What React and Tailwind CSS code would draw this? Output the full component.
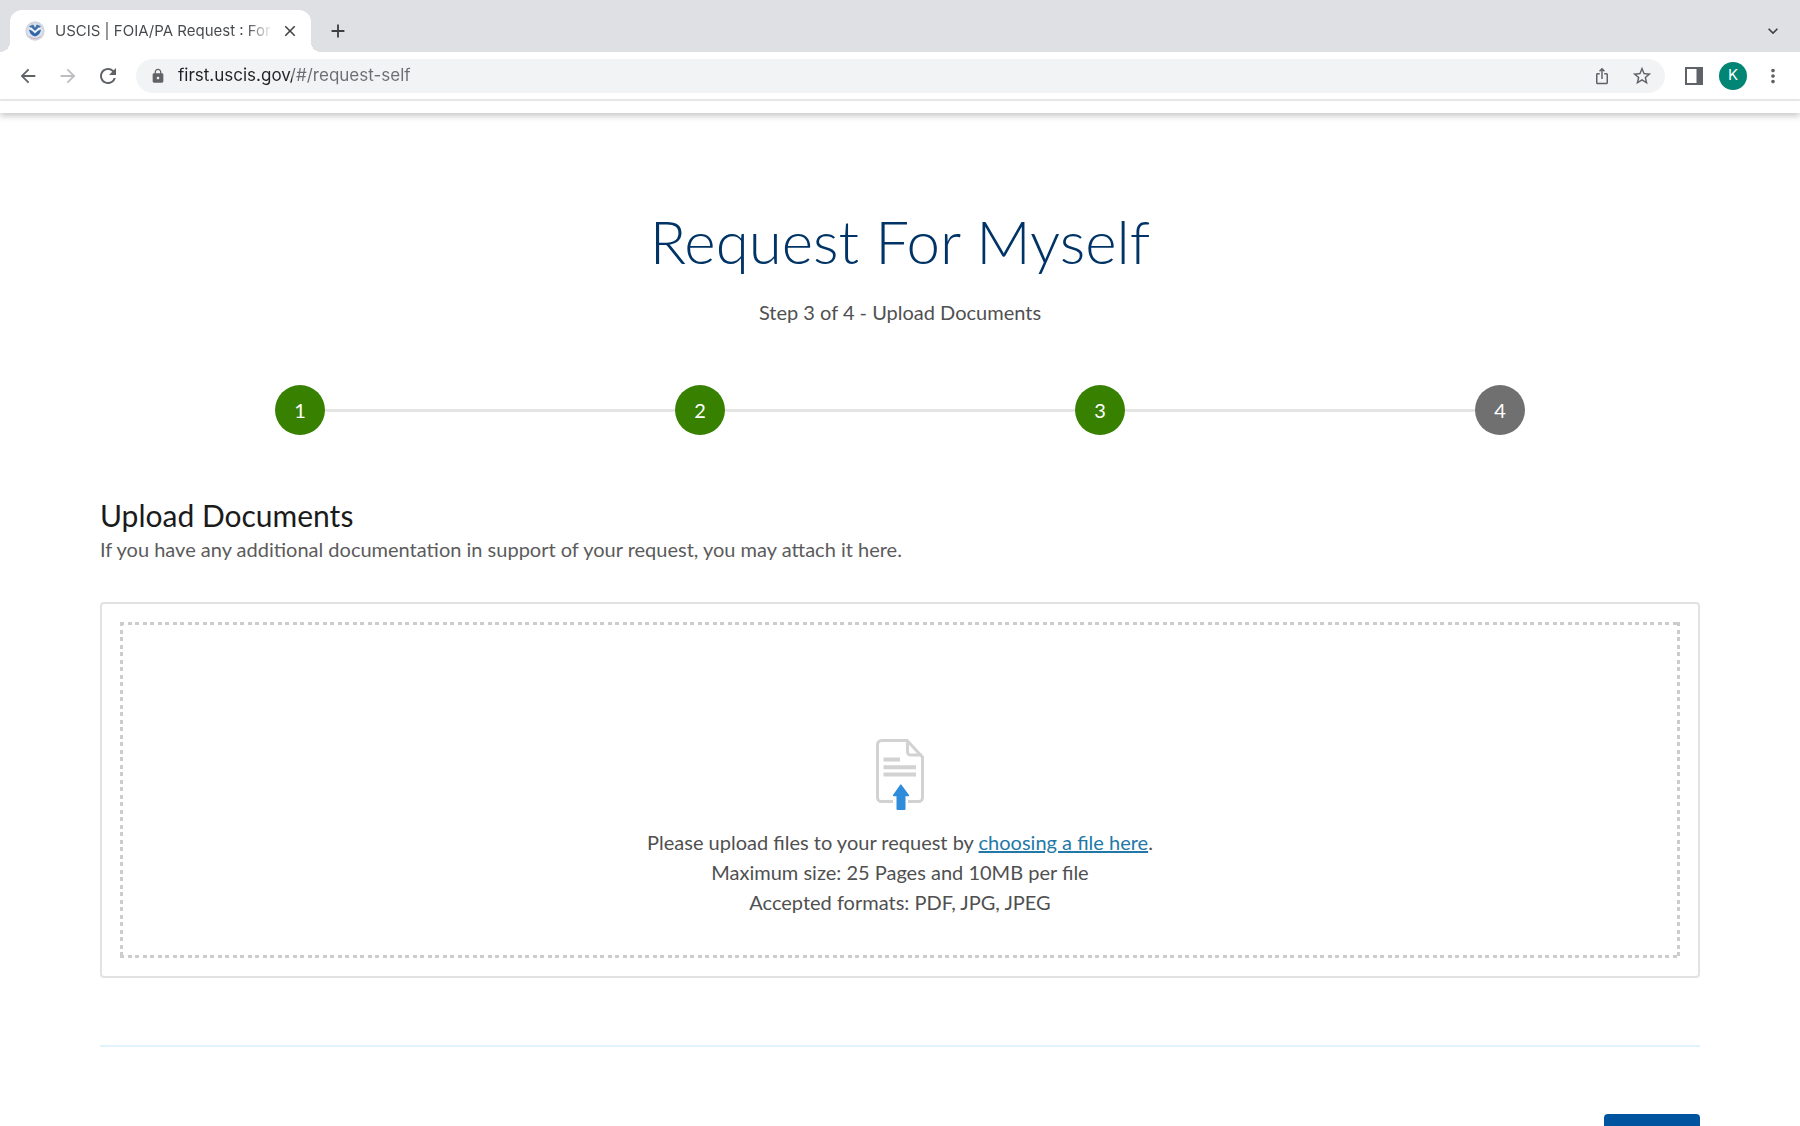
import {
  MdArrowBack,
  MdArrowForward,
  MdRefresh,
  MdLock,
  MdIosShare,
  MdStarBorder,
  MdMoreVert,
  MdClose,
  MdAdd,
  MdKeyboardArrowDown,
} from "react-icons/md";

const steps = [
  { id: 1, done: true },
  { id: 2, done: true },
  { id: 3, done: true },
  { id: 4, done: false },
];

const SealIcon = () => (
  <svg viewBox="0 0 20 20" className="size-5 shrink-0" aria-hidden="true">
    <circle cx="10" cy="10" r="9.7" fill="#d3d6df" />
    <circle cx="10" cy="10" r="7.6" fill="#dbe4ee" />
    <path d="M4 5.2 L8.200 3.600 L10 6.800 L11.800 3.600 L16 5.200 L12.600 8.600 L10 10 L7.400 8.600 Z" fill="#4470a8" />
    <path d="M5.600 6.800 L10 11 L14.400 6.800" fill="none" stroke="#f4f9fd" strokeWidth="1.4" />
    <path d="M4 8.400 L7 9.800 L10 12.400 L13 9.800 L16 8.400 Q15.400 13.600 10 15.600 Q4.600 13.600 4 8.400 Z" fill="#2f66a8" />
    <path d="M4.500 15.400 Q10 19.600 15.500 15.400" fill="none" stroke="#cdb0ba" strokeWidth="1" />
  </svg>
);

const SidePanelIcon = () => (
  <svg viewBox="0 0 18 18" className="size-[18px]" aria-hidden="true">
    <path d="M0 0h18v18H0z M2 2v14h9.500V2z" fill="#5f6368" fillRule="evenodd" />
  </svg>
);

const UploadIcon = () => (
  <svg viewBox="0 0 48 72" className="h-[72px] w-12" fill="none" aria-hidden="true">
    <path
      d="M17 62.500H5.500a4 4 0 0 1-4-4V5.500a4 4 0 0 1 4-4H31L46.500 18v40.500a4 4 0 0 1-4 4H32"
      stroke="#d2d2d2"
      strokeWidth="3"
    />
    <path d="M31.500 2v11a3 3 0 0 0 3 3H46" stroke="#d2d2d2" strokeWidth="3" />
    <path d="M7.500 20.500H24M7.500 28.200H40M7.500 35.500H40" stroke="#d2d2d2" strokeWidth="4" />
    <path
      d="M25.200 45.600L33 56a.8.8 0 0 1-.6 1.200H29.500V70a1 1 0 0 1-1 1h-7a1 1 0 0 1-1-1V57.200h-2.900a.8.8 0 0 1-.6-1.200l7.400-10.400a.5.5 0 0 1 .8 0z"
      fill="#2f8cda"
    />
  </svg>
);

const TabStrip = () => (
  <div className="flex h-[52px] items-end bg-[#dee0e4] pl-[10px]">
    <div className="relative flex h-[42px] w-[301px] items-center rounded-t-xl bg-white pr-3 pl-[15px]">
      {/* flared feet of the active tab */}
      <div className="absolute bottom-0 -left-[10px] size-[10px] bg-[radial-gradient(circle_at_top_left,#dee0e4_10px,#ffffff_10px)]" />
      <div className="absolute -right-[10px] bottom-0 size-[10px] bg-[radial-gradient(circle_at_top_right,#dee0e4_10px,#ffffff_10px)]" />
      <SealIcon />
      <div className="ml-[10px] flex-1 overflow-hidden bg-[linear-gradient(to_right,#45484c_88%,transparent)] bg-clip-text text-[15px] whitespace-nowrap text-transparent">
        USCIS | FOIA/PA Request : For
      </div>
      <button type="button" aria-label="Close tab" className="ml-2 text-[#3c4043]">
        <MdClose size={18} />
      </button>
    </div>
    <button type="button" aria-label="New tab" className="ml-4 flex h-[42px] items-center text-[#3c4043]">
      <MdAdd size={22} />
    </button>
    <button type="button" aria-label="Search tabs" className="mr-[17px] ml-auto flex h-[42px] items-center text-[#3c4043]">
      <MdKeyboardArrowDown size={20} />
    </button>
  </div>
);

const Toolbar = () => (
  <div className="flex h-[49px] items-center border-b-2 border-[#ebecee] pr-4 pl-[17px] text-[#5f6368]">
    <button type="button" aria-label="Back">
      <MdArrowBack size={22} />
    </button>
    <button type="button" aria-label="Forward" className="ml-[18px] text-[#bcbec1]">
      <MdArrowForward size={22} />
    </button>
    <button type="button" aria-label="Reload" className="ml-[17px]">
      <MdRefresh size={24} />
    </button>
    <div className="ml-4 flex h-[34px] flex-1 items-center rounded-full bg-[#f1f3f4] pr-3 pl-[14px]">
      <MdLock size={16} />
      <input
        type="text"
        aria-label="Address"
        defaultValue="first.uscis.gov/#/request-self"
        className="ml-3 flex-1 bg-[linear-gradient(to_right,#202124_114px,#6a6e73_114px)] bg-clip-text text-[17px] text-transparent outline-none"
      />
      <button type="button" aria-label="Share">
        <MdIosShare size={18} />
      </button>
      <button type="button" aria-label="Bookmark this page" className="ml-5">
        <MdStarBorder size={22} />
      </button>
    </div>
    <button type="button" aria-label="Side panel" className="ml-5">
      <SidePanelIcon />
    </button>
    <button
      type="button"
      aria-label="Profile"
      className="ml-4 flex size-7 items-center justify-center rounded-full bg-[#018574] text-[15px] text-white"
    >
      K
    </button>
    <button type="button" aria-label="Menu" className="ml-[15px]">
      <MdMoreVert size={22} />
    </button>
  </div>
);

const StepBar = () => (
  <ol className="mt-[58px] grid grid-cols-4">
    {steps.map((step, i) => (
      <li key={step.id} className="flex items-center">
        <span className={i === 0 ? "h-[3px] flex-1" : "h-[3px] flex-1 bg-[#e5e5e5]"} />
        <span
          className={
            step.done
              ? "flex size-[50px] items-center justify-center rounded-full bg-[#378000] text-xl text-white"
              : "flex size-[50px] items-center justify-center rounded-full bg-[#707070] text-xl text-white"
          }
        >
          {step.id}
        </span>
        <span className={i === steps.length - 1 ? "h-[3px] flex-1" : "h-[3px] flex-1 bg-[#e5e5e5]"} />
      </li>
    ))}
  </ol>
);

const App = () => {
  return (
    <div className="flex h-screen flex-col overflow-hidden bg-white">
      <header className="font-[Inter,sans-serif]">
        <TabStrip />
        <Toolbar />
      </header>
      <div className="h-3 shrink-0 shadow-[0_3px_6px_rgba(0,0,0,0.22)]" />
      <main className="flex-1 overflow-hidden px-[100px] font-[Lato,sans-serif] text-xl text-[#505050]">
        <h1 className="mt-[88px] text-center text-6xl leading-[80px] font-light text-[#003366]">
          Request For Myself
        </h1>
        <p className="mt-4 text-center leading-[30px]">Step 3 of 4 - Upload Documents</p>
        <StepBar />
        <h2 className="mt-[61px] text-[30px] leading-[38px] text-[#1b1b1b]">Upload Documents</h2>
        <p className="leading-[30px] text-[#5b5b5b]">
          If you have any additional documentation in support of your request, you may attach it here.
        </p>
        <section className="mt-[38px] rounded-sm border-2 border-[#e2e2e2] p-[18px]">
          {/* short dashes on all four sides */}
          <div className="flex flex-col items-center bg-[repeating-linear-gradient(90deg,#cccccc_0_4px,transparent_4px_8px,#cccccc_8px_12px,transparent_12px_15px),repeating-linear-gradient(90deg,#cccccc_0_4px,transparent_4px_8px,#cccccc_8px_12px,transparent_12px_15px),repeating-linear-gradient(180deg,#cccccc_0_4px,transparent_4px_8px,#cccccc_8px_12px,transparent_12px_15px),repeating-linear-gradient(180deg,#cccccc_0_4px,transparent_4px_8px,#cccccc_8px_12px,transparent_12px_15px)] bg-[length:100%_3px,100%_3px,3px_100%,3px_100%] bg-[position:left_top,left_bottom,left_top,right_top] bg-no-repeat pt-[117px] pb-[41px] text-center leading-[30px]">
            <UploadIcon />
            <p className="mt-4">
              Please upload files to your request by{" "}
              <a href="#choose-file" className="text-[#2378a8] underline">
                choosing a file here
              </a>
              .
            </p>
            <p>Maximum size: 25 Pages and 10MB per file</p>
            <p>Accepted formats: PDF, JPG, JPEG</p>
          </div>
        </section>
        <hr className="mt-[67px] border-t-2 border-[#e1f3fc]" />
        <div className="mt-[67px] flex justify-end">
          <button type="button" aria-label="Next" className="h-14 w-24 rounded-sm bg-[#00539f]" />
        </div>
      </main>
    </div>
  );
};

export default App;
